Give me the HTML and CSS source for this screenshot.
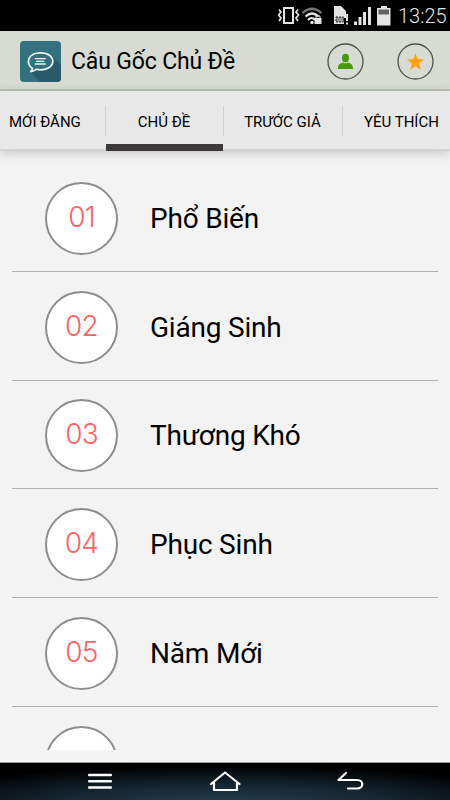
FILE: index.html
```html
<!DOCTYPE html>
<html lang="vi">
<head>
    <meta charset="UTF-8">
    <meta name="viewport" content="width=device-width, initial-scale=1.0">
    <title>Câu Gốc Chủ Đề</title>
    <link rel="stylesheet" href="styles.css">
</head>
<body>
    <div class="status-bar">
        <svg class="status-icons" width="118" height="31" viewBox="0 0 118 31">
            <!-- Rung -->
            <g fill="none" stroke="#e4e4e4">
                <rect x="6" y="8" width="9" height="15" stroke-width="2"/>
                <path d="M1 9.500l2 2.500-2.500 3 2.500 3-2 3M20 9.500l-2 2.500 2.500 3-2.500 3 2 3" stroke-width="1.700"/>
            </g>
            <!-- Wifi -->
            <g fill="none" stroke-width="2.200">
                <path d="M24.500 13q9.500-8.500 19 0" stroke="#777"/>
                <path d="M27.500 16.500q6.500-6 13 0" stroke="#e4e4e4"/>
                <path d="M30 20q4-4 7 0" stroke="#e4e4e4"/>
            </g>
            <circle cx="34" cy="22.500" r="1.700" fill="#e4e4e4"/>
            <rect x="36.500" y="18" width="7" height="6" fill="#e4e4e4"/>
            <path d="M38 18v-2h4v2" fill="none" stroke="#e4e4e4"/>
            <!-- Thẻ sim -->
            <path d="M56 6h7l5 5v7h-2v6H56z" fill="#e4e4e4"/>
            <rect x="58" y="17" width="7.500" height="5" fill="#999" stroke="#222" stroke-dasharray="2 1"/>
            <path d="M68 14h2v7h-2zM68 22.500h2v2h-2z" fill="#e4e4e4"/>
            <!-- Sóng -->
            <path d="M76 21.500h3V25h-3zM80.500 17h3v8h-3zM85 12h3v13h-3zM90 7h3v18h-3z" fill="#e4e4e4"/>
            <!-- Pin -->
            <path d="M103 6h6v2h3.500v17.500H99V8h4z" fill="#e4e4e4"/>
            <rect x="100.500" y="9.500" width="10.500" height="5" fill="#626262"/>
        </svg>
        <span class="clock">13:25</span>
    </div>

    <div class="header">
        <svg class="logo" width="41" height="41" viewBox="0 0 41 41">
            <rect width="41" height="41" rx="4" fill="#33717f"/>
            <path d="M32 15l9 9v13a4 4 0 0 1-4 4H20L10 31z" fill="#285a6a"/>
            <path d="M12.500 27.500C5.500 22.500 7.500 11.800 20.500 11.800c16.500 0 16.500 17 0 17-1.500 0-3-.2-4.200-.5-1.600 1.300-3.300 2-5.600 2.400 1.200-1 1.800-2 1.800-3.200z" fill="#33717f" stroke="#e9f3f3" stroke-width="1.700" stroke-linejoin="round"/>
            <path d="M14.800 17.700h11M16.200 20.300h8M14.800 23h11" stroke="#e9f3f3" stroke-width="1.300"/>
        </svg>
        <h1 class="title">Câu Gốc Chủ Đề</h1>
        <div class="actions">
            <svg width="37" height="37" viewBox="0 0 37 37">
                <circle cx="18.500" cy="18.500" r="17.500" fill="none" stroke="#4c524c" stroke-width="1.300"/>
                <ellipse cx="18.500" cy="15" rx="3.500" ry="4.200" fill="#48980a"/>
                <path d="M11 26c0-4.300 1.200-5.300 5-6.600q2.500 1.800 5 0c3.800 1.300 5 2.300 5 6.600z" fill="#48980a"/>
            </svg>
            <svg width="37" height="37" viewBox="0 0 37 37">
                <circle cx="18.500" cy="18.500" r="17.500" fill="none" stroke="#4c524c" stroke-width="1.300"/>
                <path d="M18.500 10.500l2.200 5.700 6.400.3-5 4 1.700 6.200-5.300-3.500-5.300 3.500 1.700-6.200-5-4 6.400-.3z" fill="#ffa20d"/>
            </svg>
        </div>
    </div>

    <div class="tabs">
        <div class="tab">MỚI ĐĂNG</div>
        <div class="tab active">CHỦ ĐỀ</div>
        <div class="tab">TRƯỚC GIẢ</div>
        <div class="tab">YÊU THÍCH</div>
    </div>

    <div class="list">
        <div class="row"><div class="number">01</div><div class="name">Phổ Biến</div></div>
        <div class="row"><div class="number">02</div><div class="name">Giáng Sinh</div></div>
        <div class="row"><div class="number">03</div><div class="name">Thương Khó</div></div>
        <div class="row"><div class="number">04</div><div class="name">Phục Sinh</div></div>
        <div class="row"><div class="number">05</div><div class="name">Năm Mới</div></div>
        <div class="row"><div class="number"></div></div>
    </div>

    <div class="nav-bar">
        <svg width="450" height="37" viewBox="0 0 450 37" fill="none" stroke="#fff" stroke-width="2.500" stroke-linecap="round" stroke-linejoin="round">
            <path d="M89.200 12h21.600M89.200 18.300h21.600M89.200 24.500h21.600"/>
            <path d="M211 21l14-11.500L239.500 21M214 19.500v7.500h23v-7.500" stroke-width="2.200"/>
            <path d="M346 10l-7.500 7H357c7 0 7 8.500 0 8.500h-9" stroke-width="2.200"/>
        </svg>
    </div>
</body>
</html>
```
FILE: styles.css
```css
* {
    box-sizing: border-box;
}
body {
    margin: 0;
    width: 450px;
    height: 800px;
    overflow: hidden;
    display: flex;
    flex-direction: column;
    background: #f3f3f3;
    color: #000;
    font-family: Roboto, "Noto Sans", sans-serif;
}
.status-bar {
    height: 31px;
    display: flex;
    align-items: center;
    justify-content: flex-end;
    padding-right: 2px;
    background: #000;
    color: #e4e4e4;
}
.status-icons {
    margin-right: 2px;
}
.clock {
    width: 50px;
    font-size: 20px;
    font-weight: 300;
    line-height: 31px;
    padding-top: 2px;
    white-space: nowrap;
}
.header {
    height: 60px;
    display: flex;
    align-items: center;
    padding: 2px 16.5px 0 20px;
    background: #d7dbd3;
    border-bottom: 2px solid #bbc2b9;
}
.logo {
    margin-right: 10px;
}
.title {
    margin: 0;
    padding-top: 1px;
    font-size: 23px;
    font-weight: 400;
    line-height: 40px;
    letter-spacing: -0.15px;
    white-space: nowrap;
}
.actions {
    margin-left: auto;
    display: flex;
    gap: 33px;
}

/* Thanh tab */
.tabs {
    height: 60px;
    flex-shrink: 0;
    display: grid;
    grid-template-columns: 105px 118px 119px 108px;
    background: linear-gradient(#e8e8e8 58px, #d3d3d3 58px);
    box-shadow: 0 2px 10px rgba(0, 0, 0, 0.2);
    font-size: 15px;
}
.tab {
    display: flex;
    align-items: center;
    justify-content: center;
    padding-top: 1px;
    white-space: nowrap;
    background: linear-gradient(#cfcfcf, #cfcfcf) left 15px / 1px 30px no-repeat;
}
.tab:first-child {
    background: none;
    justify-content: flex-start;
    padding-left: 9px;
}
.tab:last-child {
    justify-content: flex-start;
    padding-left: 22px;
}
.tab.active {
    background:
        linear-gradient(#3b3939, #3b3939) 1px 53px / 117px 7px no-repeat,
        linear-gradient(#cfcfcf, #cfcfcf) left 15px / 1px 30px no-repeat;
}

/* Danh sách chủ đề */
.list {
    height: 587px;
    flex-shrink: 0;
    margin: 12px 12px 0;
    overflow: hidden;
}
.row {
    height: 108.8px;
    display: flex;
    align-items: center;
    padding: 3px 0 0 33px;
    border-bottom: 1px solid #b0b0b0;
}
.number {
    width: 73px;
    height: 73px;
    flex-shrink: 0;
    border: 2px solid #8d8d8d;
    border-radius: 50%;
    background: #fff;
    color: #ff6262;
    font-family: Inter, "Liberation Sans", sans-serif;
    font-size: 28px;
    font-weight: 300;
    line-height: 67px;
    letter-spacing: -0.8px;
    text-align: center;
}
.name {
    margin-left: 32px;
    padding-top: 1px;
    font-size: 28px;
    line-height: 40px;
    letter-spacing: -0.2px;
}

/* Thanh điều hướng */
.nav-bar {
    height: 38px;
    flex-shrink: 0;
    margin-top: auto;
    border-top: 1px solid #999;
    background: radial-gradient(ellipse 340px 40px at 50% 115%, #24404f, #152733 50%, #000 100%);
}
.nav-bar svg {
    display: block;
}
```
